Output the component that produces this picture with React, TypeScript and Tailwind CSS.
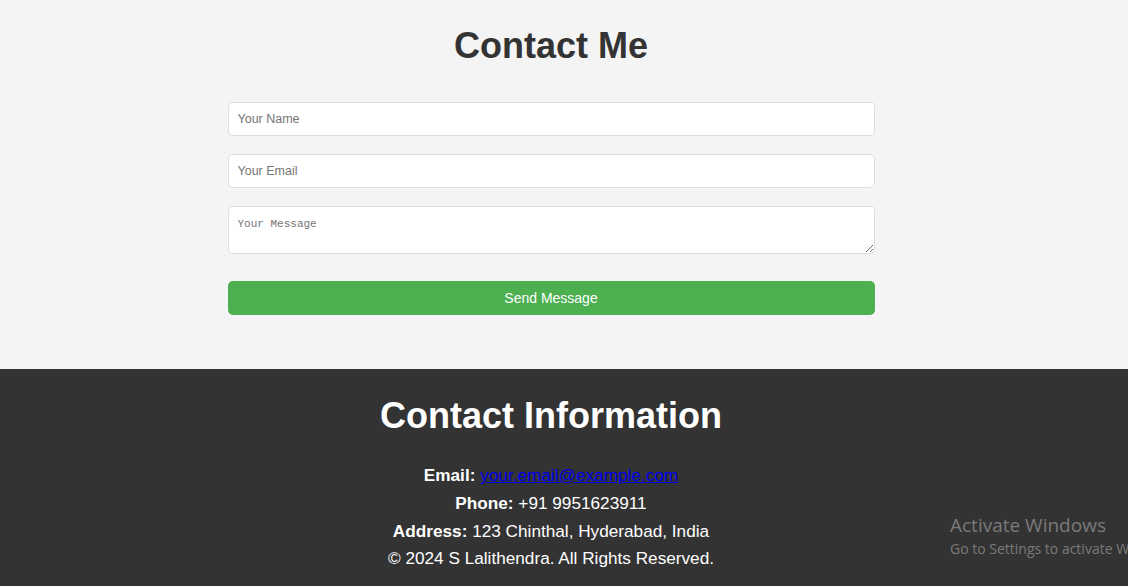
export default function App() {
  return (
    <div className="min-h-[586px] flex flex-col bg-[#f4f4f4] font-['Liberation_Sans',Arial,sans-serif]">
      {/* Contact form */}
      <section className="pt-[25px] pb-[54px] pr-[26px] flex flex-col items-center">
        <h2 className="text-[36px] leading-[41px] font-bold text-[#333]">Contact Me</h2>
        <form className="w-[647px] mt-[36px] flex flex-col gap-[18px]" onSubmit={(e) => e.preventDefault()}>
          <input
            type="text"
            placeholder="Your Name"
            className="h-[34px] px-[9px] bg-white border border-[#ddd] rounded-[5px] text-[12.5px] text-[#333] placeholder:text-[#757575] outline-none"
          />
          <input
            type="email"
            placeholder="Your Email"
            className="h-[34px] px-[9px] bg-white border border-[#ddd] rounded-[5px] text-[12.5px] text-[#333] placeholder:text-[#757575] outline-none"
          />
          <textarea
            placeholder="Your Message"
            className="h-[48px] px-[9px] pt-[10px] bg-white border border-[#ddd] rounded-[5px] text-[11px] leading-[14px] font-['Liberation_Mono',monospace] text-[#333] placeholder:text-[#757575] outline-none"
          />
          <button
            type="submit"
            className="mt-[9px] h-[34px] bg-[#4caf50] text-white text-[14px] rounded-[5px]"
          >
            Send Message
          </button>
        </form>
      </section>

      {/* Contact info */}
      <footer className="relative overflow-hidden flex-1 bg-[#333] text-white pt-[26px] pb-[12px] pr-[26px] flex flex-col items-center text-center">
        <h2 className="text-[36px] leading-[41px] font-bold">Contact Information</h2>
        <div className="mt-[30px] flex flex-col gap-[10px] text-[17.2px] leading-[18px]">
          <p>
            <strong>Email:</strong>{" "}
            <a href="mailto:your.email@example.com" className="text-[#0000ee] underline">
              your.email@example.com
            </a>
          </p>
          <p>
            <strong>Phone:</strong> +91 9951623911
          </p>
          <p>
            <strong>Address:</strong> 123 Chinthal, Hyderabad, India
          </p>
          <p className="-mt-[1px]">© 2024 S Lalithendra. All Rights Reserved.</p>
        </div>

        <div className="absolute left-[950px] top-[144px] text-left whitespace-nowrap text-[#7a7a7a] font-['Open_Sans',sans-serif]">
          <div className="text-[19px] leading-[24px]">Activate Windows</div>
          <div className="text-[14px] leading-[20px] mt-[2px]">Go to Settings to activate Windows.</div>
        </div>
      </footer>
    </div>
  );
}
